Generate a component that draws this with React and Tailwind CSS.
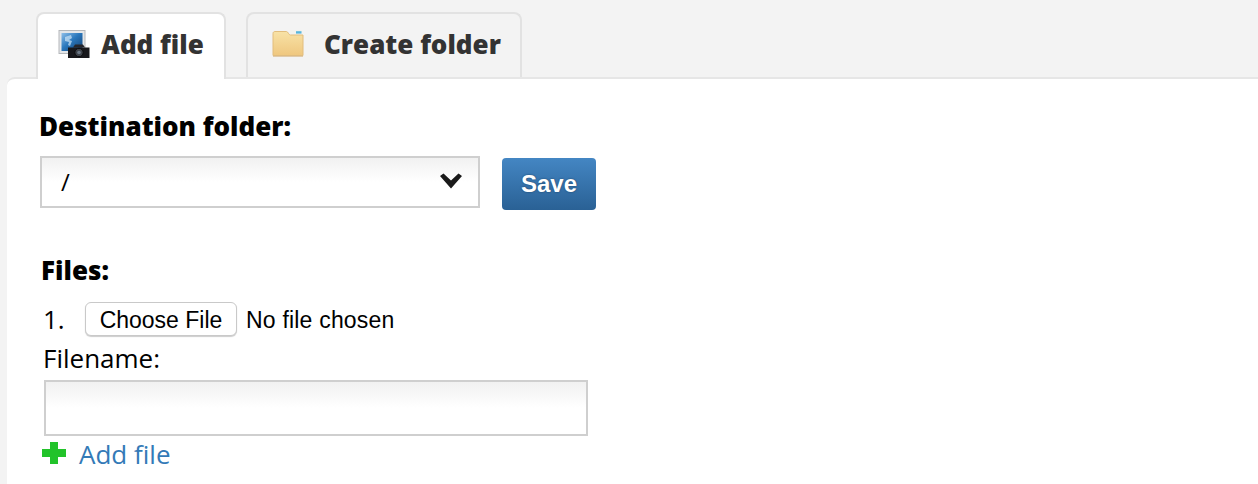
function PhotoIcon() {
  return (
    <svg width="32" height="30" viewBox="0 0 32 30" className="shrink-0">
      <defs>
        <linearGradient id="ph" x1="0" y1="0" x2="1" y2="1">
          <stop offset="0" stopColor="#8fbfe8" />
          <stop offset="0.45" stopColor="#2a78bd" />
          <stop offset="1" stopColor="#143f70" />
        </linearGradient>
      </defs>
      <rect x="1" y="1.5" width="26" height="23" fill="#e4e6e8" stroke="#b5b8bb" strokeWidth="1" />
      <rect x="3.5" y="4" width="21" height="18" fill="url(#ph)" />
      <path d="M7 8l6-2 1 3-3 2 3 1-2 5-2-1 1-3-4-1z" fill="#cfe6f7" opacity="0.7" />
      <path d="M10 18.5h21.5v10.5H10z" fill="#18181c" />
      <path d="M15 18.5l2-3h8l2 3z" fill="#26262b" />
      <circle cx="21" cy="23.5" r="4.2" fill="#3d4148" stroke="#0b0b0d" strokeWidth="1" />
      <circle cx="21" cy="23.5" r="1.8" fill="#6b7786" />
    </svg>
  );
}

function FolderIcon() {
  return (
    <svg width="32" height="28" viewBox="0 0 32 28" className="shrink-0">
      <defs>
        <linearGradient id="fo" x1="0" y1="0" x2="0" y2="1">
          <stop offset="0" stopColor="#f8e2a6" />
          <stop offset="1" stopColor="#efc77f" />
        </linearGradient>
      </defs>
      <path d="M18 1h12.5v6H18z" fill="#f2f2ee" />
      <path d="M24 2.2h5.5v2.4H24z" fill="#57b5dc" />
      <path d="M1 4.5C1 3 2 2.5 3 2.5h11.5c1.5 0 2.2 3.5 4 3.5H31v20.5H1z" fill="url(#fo)" stroke="#e2bd7c" strokeWidth="1" />
      <path d="M1 26.5h30V28H1z" fill="#d9b98a" opacity="0.7" />
    </svg>
  );
}

function Chevron() {
  return (
    <svg width="22" height="16" viewBox="0 0 22 16" className="shrink-0">
      <path d="M0 3 L3.5 .5 L11 7.5 L18.5 .5 L22 3 L11 15.5 Z" fill="#1a1a1a" />
    </svg>
  );
}

export default function App() {
  const open = { fontFamily: '"Open Sans", sans-serif' };
  const lib = { fontFamily: '"Liberation Sans", sans-serif' };
  return (
    <div className="h-[484px] w-[1258px] overflow-hidden bg-[#f3f3f3] text-black" style={open}>
      <div className="flex h-[77px] items-end gap-[20px] pl-[36px]">
        <div className="relative z-10 -mb-[2px] flex h-[67px] w-[190px] items-start gap-[11px] rounded-t-[8px] border-2 border-b-0 border-[#e2e2e2] bg-white pl-[20px] pt-[15px]">
          <PhotoIcon />
          <span className="text-[26px] leading-[30px] font-extrabold text-[#333]">Add file</span>
        </div>
        <div className="flex h-[65px] w-[276px] items-start gap-[20px] rounded-t-[8px] border-2 border-b-0 border-[#e2e2e2] bg-[#f3f3f3] pl-[24px] pt-[15px]">
          <FolderIcon />
          <span className="text-[26px] leading-[30px] font-extrabold text-[#333]">Create folder</span>
        </div>
      </div>
      <div className="ml-[7px] h-[407px] rounded-tl-[8px] border-t-2 border-[#e6e6e6] bg-white pl-[32px]">
        <div className="pt-[30px] text-[26px] leading-[34px] font-extrabold">Destination folder:</div>
        <div className="mt-[13px] flex items-start gap-[22px] pl-px">
          <div className="flex h-[52px] w-[440px] items-center justify-between border-2 border-[#cfcfcf] bg-[linear-gradient(#f1f1f1,#ffffff_50%)] pl-[19px] pr-[7px]">
            <span className="text-[24px] leading-[30px]">/</span>
            <span className="pb-[3px] pr-[9px]"><Chevron /></span>
          </div>
          <button
            className="mt-[2px] h-[52px] w-[94px] rounded-[4px] bg-[linear-gradient(#4486c3,#2a6195)] text-[24px] font-bold text-white [text-shadow:0_0_2px_#1b3f63]"
            style={lib}
          >
            Save
          </button>
        </div>
        <div className="mt-[43px] pl-[2px] text-[26px] leading-[34px] font-extrabold">Files:</div>
        <div className="mt-[15px] flex h-[34px] items-center pl-[4px]">
          <span className="w-[42px] text-[26px] leading-[34px]">1.</span>
          <button
            className="h-[34px] w-[152px] rounded-[6px] border border-[#c9c9c9] bg-white pt-[2px] text-[23px] leading-[30px] shadow-[0_1px_1px_rgba(0,0,0,0.2)]"
            style={lib}
          >
            Choose File
          </button>
          <span className="ml-[9px] mt-[2px] text-[23px] leading-[30px] tracking-[0.2px]" style={lib}>No file chosen</span>
        </div>
        <div className="mt-[5px] pl-[4px] text-[26px] leading-[34px]">Filename:</div>
        <div className="mt-[5px] ml-[5px] h-[56px] w-[544px] border-2 border-[#cfcfcf] bg-[linear-gradient(#f1f1f1,#ffffff_50%)]" />
        <div className="mt-[1px] flex items-center gap-[13px] pl-[3px]">
          <svg width="24" height="22" viewBox="0 0 24 22" className="mb-[3px] shrink-0">
            <path d="M8 0h8v7h8v8h-8v7H8v-7H0V7h8z" fill="#22c32a" />
          </svg>
          <span className="text-[26px] leading-[34px] text-[#337ab7]">Add file</span>
        </div>
      </div>
    </div>
  );
}
